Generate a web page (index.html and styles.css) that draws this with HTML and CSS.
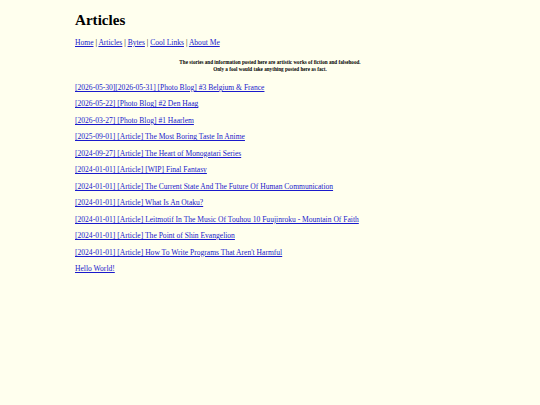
FILE: index.html
```html
<!DOCTYPE html>
<html>
<head>
<meta charset="utf-8">
<title>Articles</title>
<link rel="stylesheet" href="styles.css">
</head>
<body>
<div class="page">
<h1 class="title">Articles</h1>
<nav class="nav"><a href="#">Home</a> | <a href="#">Articles</a> | <a href="#">Bytes</a> | <a href="#">Cool Links</a> | <a href="#">About Me</a></nav>
<p class="disclaimer">The stories and information posted here are artistic works of fiction and falsehood.<br>Only a fool would take anything posted here as fact.</p>
<ul class="list">
<li><a href="#">[2026-05-30][2026-05-31] [Photo Blog] #3 Belgium &amp; France</a></li>
<li><a href="#">[2026-05-22] [Photo Blog] #2 Den Haag</a></li>
<li><a href="#">[2026-03-27] [Photo Blog] #1 Haarlem</a></li>
<li><a href="#">[2025-09-01] [Article] The Most Boring Taste In Anime</a></li>
<li><a href="#">[2024-09-27] [Article] The Heart of Monogatari Series</a></li>
<li><a href="#">[2024-01-01] [Article] [WIP] Final Fantasy</a></li>
<li><a href="#">[2024-01-01] [Article] The Current State And The Future Of Human Communication</a></li>
<li><a href="#">[2024-01-01] [Article] What Is An Otaku?</a></li>
<li><a href="#">[2024-01-01] [Article] Leitmotif In The Music Of Touhou 10 Fuujinroku - Mountain Of Faith</a></li>
<li><a href="#">[2024-01-01] [Article] The Point of Shin Evangelion</a></li>
<li><a href="#">[2024-01-01] [Article] How To Write Programs That Aren't Harmful</a></li>
<li><a href="#">Hello World!</a></li>
</ul>
</div>
</body>
</html>
```
FILE: styles.css
```css
html, body {
  margin: 0;
  padding: 0;
  background: #ffffee;
}
body {
  font-family: "Liberation Serif", "Times New Roman", serif;
  font-size: 7.57px;
  color: #000;
}
.page {
  width: 390px;
  margin: 0 auto;
  padding-top: 11px;
}
.title {
  font-size: 15.1px;
  font-weight: bold;
  margin: 0 0 9px 0;
  line-height: 18px;
}
.nav {
  line-height: 9px;
  margin-bottom: 12px;
}
a {
  color: #1a1acc;
  text-decoration: underline;
}
.disclaimer {
  text-align: center;
  font-size: 5.15px;
  font-weight: bold;
  line-height: 7px;
  margin: 0 0 11px 0;
}
.list {
  list-style: none;
  margin: 0;
  padding: 0;
  display: flex;
  flex-direction: column;
  gap: 8px;
}
.list li {
  line-height: 8.45px;
}
```
